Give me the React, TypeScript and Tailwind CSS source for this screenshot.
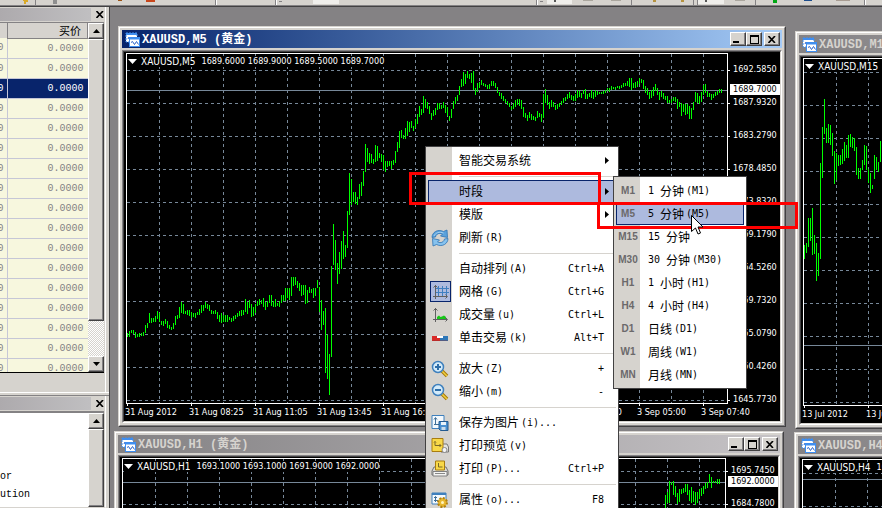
import type { ReactNode } from "react"
import clsx from "clsx"

type Run = { x: number; y: number; bars: string }

// Each bar is "high-low" in ticks, three ticks to a pixel, one bar every two pixels.
const m5Runs: Run[] = [
  {
    x: 1,
    y: 177,
    bars: `310-322 303-321 300-309 300-312 306-323 312-321 309-321 309-317 306-317 285-309 279-294 249-279
      264-279 264-276 258-276 243-267 249-276 273-285 273-288 267-282 273-293 285-297 291-300 279-297 258-285
      255-267 231-264 216-249 222-252 243-252 240-255 240-258 245-263 249-261 249-264 246-255 237-255 225-249
      225-243 216-234 222-237 225-243 239-251 243-253 240-252 246-267 255-276 249-279 255-276 255-276 255-275
      261-270 264-276 258-273 255-267 249-261 243-258 240-258 240-255 207-246 216-252 210-234 222-261 231-258
      222-249 213-228 207-225 210-222 204-231 216-240 213-231 195-219 195-228 213-231 207-231 219-228 213-231
      195-219 195-213 174-213 174-204 174-210 141-198 141-168 141-165 153-174 159-183 165-198 165-195 165-222
      180-219 171-189 177-189 174-204 174-198 150-174 171-246 210-300 243-285 234-429 315-447 372-495 108-381`,
  },
  {
    x: 207,
    y: -3,
    bars: `522-645 570-660 639-702 606-672 573-657 543-627 585-621 483-594 369-495 387-465 426-456 426-462
      441-465 402-447 396-438 363-408 282-366 294-336 309-342 312-339 327-342 285-336 288-333 309-324 312-336
      315-360 333-366 333-351 333-348 333-357 330-345 303-339 276-306 243-294 240-264 255-267 234-267 213-258
      216-246 213-234 228-243 207-234 192-222 168-201 177-195 138-189 147-174 156-177 168-192`,
  },
  {
    x: 305,
    y: -53,
    bars: `339-360 330-348 324-345 309-330 309-327 315-327 306-324 315-339 321-348 348-363 327-354 303-327
      291-312 285-303 258-285 237-261 216-258 222-252 213-234 222-237 219-249 213-270 264-285 249-276 246-264
      240-255 249-258 252-261 255-267 252-267 243-258 243-258 249-264 261-279 276-288 279-297 288-303 297-309
      303-315 309-321 318-330 309-327 300-321 297-315 297-318 300-327 321-351 339-354 345-363 336-354 342-360
      348-360 351-363 333-354 339-351 342-366 282-354 267-309 285-315 306-327 300-321 306-321 315-330 312-327
      309-321 303-315 294-309 291-303 282-297 276-294 285-300 288-303 282-303 270-294 273-291 279-294 270-282
      267-297 282-297 279-291 270-294 276-297 270-291 273-285 276-282 276-282 273-282 270-279 264-273 264-276
      258-270 261-267 261-270 258-264 258-267 255-264 249-261 249-258 243-258 234-261 234-270 249-264 246-264
      243-261 234-252 237-249 240-267 258-279 264-285 276-297 270-294 261-288 252-273 264-285 276-300 273-291
      279-297 288-300 288-309 300-309 297-309 291-303 291-306 297-327 306-321 309-348 312-336 312-345 312-342
      318-357 324-357 306-330 276-306 279-309 288-312 276-306 255-285 252-279 273-291 279-291 282-300 282-294
      276-288 273-285 267-279 267-279`,
  },
]

const m15Runs: Run[] = [
  {
    x: 1,
    y: -58,
    bars: `735-777 729-759 654-741 654-723 624-765 705-762 729-843 759-828 489-777 381-534 297-402 384-429
      372-429 375-435 399-468 453-552 459-540 465-498 465-495 447-492 426-483 435-474 405-474 402-441 411-444
      414-453 441-525 504-537 504-537 480-510 435-495 438-510 507-549 519-579 555-567 465-537 471-510 486-516
      423-486`,
  },
]

const h1Runs: Run[] = [
  {
    x: 543,
    y: -78,
    bars: `345-384 336-369 303-369 306-315 303-345 318-351 339-372 327-366 327-342 324-339 312-336 312-345
      330-363 321-369 333-366 336-375 336-369 327-357 324-348 318-342 309-327 306-324 282-309 291-324 303-309
      303-309 297-312 297-312`,
  },
]

const m5Prices = [
  "1692.5850",
  "1687.9320",
  "1683.2790",
  "1678.4850",
  "1673.8320",
  "1669.1790",
  "1664.5260",
  "1659.7320",
  "1655.0790",
  "1650.4260",
  "1645.7730",
]

const m5Times = [
  "31 Aug 2012",
  "31 Aug 08:25",
  "31 Aug 11:05",
  "31 Aug 13:45",
  "31 Aug 16:25",
  "31 Aug 19:05",
  "31 Aug 21:45",
  "3 Sep 02:20",
  "3 Sep 05:00",
  "3 Sep 07:40",
]

function barPath(run: Run) {
  return run.bars
    .trim()
    .split(/\s+/)
    .map((bar, i) => {
      const [high, low] = bar.split("-").map((t) => Math.round(Number(t) / 3 + run.y))
      return `M${run.x + i * 2 + 0.5} ${high}V${low}`
    })
    .join("")
}

function ChartIcon() {
  return (
    <svg width="15" height="15" viewBox="0 0 15 15" className="shrink-0" aria-hidden="true">
      <rect x="1" y="1" width="11" height="9" fill="#fff" stroke="#3f8ef0" strokeDasharray="2 1" />
      <path d="M1 2h11" stroke="#3f8ef0" strokeWidth="2" />
      <path d="M3 7l1-2 2 2 1-2" stroke="#2a62c8" fill="none" />
      <rect x="4.500" y="5.500" width="10" height="9" fill="#fff" stroke="#3f8ef0" />
      <path d="M4 6.500h11" stroke="#3f8ef0" strokeWidth="2" />
      <path d="M6 10.500l1.500-1 2 3 2-3 2 3" stroke="#2a62c8" fill="none" />
    </svg>
  )
}

function Cross() {
  return (
    <svg width="8" height="7" viewBox="0 0 8 7" aria-hidden="true">
      <path d="M.5 0l6.500 7M7 0l-6.500 7" stroke="#000" strokeWidth="1.600" />
    </svg>
  )
}

const bevel =
  "border border-t-white border-l-white border-r-[#424142] border-b-[#424142] bg-[#d6d3ce] shadow-[inset_-1px_-1px_0_#848284]"

function WindowButton({ label, children }: { label: string; children: ReactNode }) {
  return (
    <button aria-label={label} className={clsx(bevel, "flex h-[14px] w-4 items-center justify-center")}>
      {children}
    </button>
  )
}

type ChartProps = {
  symbol: string
  quote: string
  gridTop: number
  priceY: number
  width?: number
  height?: number
  runs?: Run[]
  prices?: string[]
  price?: string
  times?: string[]
}

function Chart({ symbol, quote, gridTop, priceY, width = 602, height = 351, runs = [], prices = [], price, times = [] }: ChartProps) {
  const columns = Array.from({ length: 18 }, (_, i) => 33 + i * 32)
  const rows = Array.from({ length: 11 }, (_, i) => gridTop + i * 33).filter((y) => y < height)
  return (
    <div className="relative flex-1 overflow-hidden bg-black pt-px pl-0.5 font-['DejaVu_Sans_Condensed','DejaVu_Sans',sans-serif] text-[9px] whitespace-nowrap text-white">
      <div className="flex">
        <svg width={width} height={height} className="shrink-0 overflow-visible" shapeRendering="crispEdges" aria-hidden="true">
          <g stroke="#778899" strokeDasharray="3 3">
            {columns.map((x) => (
              <path key={x} d={`M${x + 0.5} 1V${height - 1}`} />
            ))}
            {rows.map((y) => (
              <path key={y} d={`M1 ${y + 0.5}H${width - 1}`} />
            ))}
          </g>
          <path d={`M1 ${priceY + 0.5}H${width}`} stroke="#778899" />
          {runs.map((run) => (
            <path key={run.x} d={barPath(run)} stroke="#00ff00" />
          ))}
          <rect x=".5" y=".5" width={width - 1} height={height - 1} fill="none" stroke="#fff" />
          {rows.map((y) => (
            <path key={y} d={`M${width} ${y + 0.5}h2`} stroke="#fff" />
          ))}
          {times.map((_, i) => (
            <path key={i} d={`M${1.5 + i * 64} ${height}v2`} stroke="#fff" />
          ))}
        </svg>
        <div className="relative h-0 pl-[5px]">
          <div style={{ marginTop: gridTop - 17 }}>
            {prices.map((p) => (
              <div key={p} className="h-[33px] leading-[33px]">
                {p}
              </div>
            ))}
          </div>
          {price && (
            <div
              className="absolute left-0.5 bg-white px-[3px] leading-[11px] text-black"
              style={{ top: priceY - 6 }}
            >
              {price}
            </div>
          )}
        </div>
      </div>
      <div className="flex leading-[17px]">
        {times.map((t) => (
          <div key={t} className="w-16 shrink-0">
            <span className="-ml-px">{t}</span>
          </div>
        ))}
      </div>
      <div className="absolute top-1 left-[4px] flex items-center bg-black leading-[11px]">
        <svg width="13" height="5" viewBox="0 0 13 5" aria-hidden="true">
          <path d="M0 0h9L4.500 5z" fill="#fff" />
        </svg>
        <span className="text-[10px]">{symbol}</span>
        <span className="pl-1.5">{quote}</span>
      </div>
    </div>
  )
}

function ChartWindow({
  title,
  active,
  className,
  children,
}: {
  title: ReactNode
  active?: boolean
  className: string
  children: ReactNode
}) {
  return (
    <section className={clsx("absolute border border-t-[#d6d3ce] border-l-[#d6d3ce] border-r-[#424142] border-b-[#424142]", className)}>
      <div className="flex h-full flex-col border border-t-white border-l-white border-r-[#848284] border-b-[#848284] bg-[#d6d3ce] p-0.5">
        <header
          className={clsx(
            "flex h-[18px] shrink-0 items-center overflow-hidden pr-0.5 pl-[3px]",
            active ? "bg-linear-to-r from-[#08246b] to-[#a5cbf7]" : "bg-linear-to-r from-[#848284] to-[#c6c3c6]",
          )}
        >
          <ChartIcon />
          <h2
            className={clsx(
              "flex-1 pt-0.5 pl-0.5 font-['Liberation_Mono','Noto_Sans_CJK_SC',monospace] text-[12px] leading-4 font-bold whitespace-pre",
              active ? "text-white" : "text-[#d6d3ce]",
            )}
          >
            {title}
          </h2>
          <WindowButton label="最小化">
            <span className="mt-1.5 mr-1 h-0.5 w-1.5 bg-black" />
          </WindowButton>
          <WindowButton label="最大化">
            <span className="h-[9px] w-[9px] border border-t-2 border-black" />
          </WindowButton>
          <span className="w-0.5" />
          <WindowButton label="关闭">
            <Cross />
          </WindowButton>
        </header>
        <div className="mt-0.5 flex min-h-0 flex-1 border-t border-r border-b border-l border-t-[#848284] border-r-white border-b-white border-l-[#848284]">
          <div className="flex flex-1 border-t border-r border-b border-l border-t-[#424142] border-r-[#d6d3ce] border-b-[#d6d3ce] border-l-[#424142]">
            {children}
          </div>
        </div>
      </div>
    </section>
  )
}

function Toolbar() {
  return (
    <header className="h-[7px] shrink-0 overflow-hidden border-b border-[#424142] bg-[#d6d3ce]">
      <svg width="882" height="6" viewBox="0 0 882 6" shapeRendering="crispEdges" aria-hidden="true">
        <path d="M35.500 0v5M697.500 0v5M755.500 0v5M631.500 0v5M693.500 0v5" stroke="#848284" />
        <path d="M215.500 0v6M275.500 0v6M536.500 0v6M864.500 0v6" stroke="#848284" />
        <path d="M216.500 0v6M276.500 0v6M537.500 0v6M865.500 0v6" stroke="#fff" />
        <path d="M279 1.500h3M540 1.500h3" stroke="#848284" />
        <path d="M313 0h26v4h-26zM547 0h25v4h-25zM698 0h26v4h-26z" fill="#efeeeb" />
        <path d="M23 0h5v2h-2v2h-2v-2z" fill="#d9a928" />
        <path d="M53 0h4v4h-4z" fill="#8f8f8f" />
        <path d="M118 0h4v1h-4z" fill="#9c5315" />
        <path d="M146 0h9v2h-9z" fill="#c8461b" />
        <path d="M554 0h2v2h-2zM705 0h2v2h-2z" fill="#555" />
        <path d="M583 0h10v1h-10zM611 0h10v1h-10zM735 0h10v1h-10z" fill="#aaa69e" />
        <path d="M653 0h3v2h-3zM681 0h3v2h-3z" fill="#b5923e" />
        <path d="M773 0h4v3h-4z" fill="#00a814" />
        <path d="M804 0h8v1h-8z" fill="#1c4c8c" />
        <path d="M836 0h14v1h-14z" fill="#a89c92" />
        <path d="M0 5.500h882" stroke="#848284" />
      </svg>
    </header>
  )
}

function ScrollButton({ down }: { down?: boolean }) {
  return (
    <button aria-label={down ? "向下滚动" : "向上滚动"} className={clsx(bevel, "flex h-4 w-4 shrink-0 items-center justify-center")}>
      <svg width="7" height="4" viewBox="0 0 7 4" aria-hidden="true">
        <path d={down ? "M0 0h7L3.500 4z" : "M0 4h7L3.500 0z"} />
      </svg>
    </button>
  )
}

function PanelTitle() {
  return (
    <div className="flex h-[15px] shrink-0 items-center gap-[5px]">
      <div className="h-[13px] w-[91px] bg-linear-to-r from-[#adaaad] to-[#c0bfc1]" />
      <button aria-label="关闭面板">
        <Cross />
      </button>
    </div>
  )
}

function SidePanel() {
  return (
    <aside className="flex w-[110px] shrink-0 flex-col border-r border-[#424142] bg-[#d6d3ce] pr-[3px]">
      <div className="border-r border-white pr-px pb-[19px]">
        <PanelTitle />
        <div className="flex h-[351px] border-t border-b border-t-[#848284] border-b-black">
          <div className="flex-1 overflow-hidden bg-[#f7f7de]">
            <table className="w-full table-fixed border-collapse">
              <thead>
                <tr>
                  <th className="h-[15px] w-[7px] border-r border-[#848284] bg-[#d6d3ce] p-0" />
                  <th className="h-[15px] border-r border-b border-[#848284] bg-[#d6d3ce] p-0 pr-1.5 text-right font-['Noto_Sans_CJK_SC',sans-serif] text-[11px] leading-[14px] font-normal">
                    买价
                  </th>
                </tr>
              </thead>
              <tbody className="font-['Liberation_Mono',monospace] text-[10px] leading-[19px] text-[#848284]">
                {Array.from({ length: 17 }, (_, i) => (
                  <tr key={i} className={clsx("border-b border-[#c6c7d6]", i === 2 && "bg-[#08246b] text-white")}>
                    <td className="border-r border-[#c6c7d6] p-0">
                      <div className="flex h-[19px] justify-end overflow-hidden pr-[3px]">0</div>
                    </td>
                    <td className="h-5 p-0 pr-1 text-right">0.0000</td>
                  </tr>
                ))}
              </tbody>
            </table>
          </div>
          <div className="flex w-4 flex-col bg-[repeating-conic-gradient(#fff_0_25%,#d6d3ce_0_50%)] bg-size-[2px_2px]">
            <ScrollButton />
            <div className={clsx(bevel, "h-[282px]")} />
            <div className="flex-1" />
            <ScrollButton down />
          </div>
        </div>
      </div>
      <div className="-mr-[3px] h-1 shrink-0 border-t border-b border-t-white border-b-[#848284]" />
      <div className="flex flex-1 flex-col border-r border-b border-r-white border-b-[#d6d3ce] pr-px">
        <PanelTitle />
        <div className="flex flex-1 border-t-2 border-[#848284]">
          <ul className="flex-1 overflow-hidden bg-white pt-[55px] font-['Liberation_Mono',monospace] text-[10px] leading-[18px]">
            <li>or</li>
            <li>ution</li>
          </ul>
          <div className="flex w-4 flex-col">
            <ScrollButton />
            <div className={clsx(bevel, "flex-1")} />
          </div>
        </div>
      </div>
    </aside>
  )
}

function Icon({ children }: { children: ReactNode }) {
  return (
    <svg width="18" height="18" viewBox="0 0 18 18" fill="none" aria-hidden="true">
      {children}
    </svg>
  )
}

const icons = {
  refresh: (
    <Icon>
      <path d="M1 8.500C1 3.500 6.500-.5 12.500 2.500L16 1l.5 7.500-7-1.500L11.500 5C8 3.500 5 5 4.500 8z" fill="#5aa2dc" stroke="#2f74b4" strokeWidth=".8" />
      <path d="M17 9.500c0 5-5.500 9-11.500 6L2 17l-.5-7.500 7 1.500-2 2c3.500 1.500 6.500 0 7-3z" fill="#86c2ee" stroke="#2f74b4" strokeWidth=".8" />
      <path d="M3 7C4.500 3.500 8.500 2.500 12.500 4" stroke="#b8dcf6" strokeWidth=".8" />
    </Icon>
  ),
  grid: (
    <Icon>
      <path d="M7.500 3v10M11.500 3v10M15.500 3v10M4 5.500h14M4 9.500h14" stroke="#3f7fc0" />
      <path d="M4.500 2v14M2 13.500h14M2.500 4.500l2-2 2 2M14.500 11.500l2 2-2 2" stroke="#606060" />
    </Icon>
  ),
  volume: (
    <Icon>
      <path d="M6 13v-2l2-1.500 1.500 1.500 1.500-.5 2-1 2 1.500v2z" fill="#18c818" />
      <path d="M4.500 2v14M2 13.500h14M2.500 4.500l2-2 2 2M14.500 11.500l2 2-2 2" stroke="#606060" />
    </Icon>
  ),
  trade: (
    <Icon>
      <path d="M1 7h8v5H1z" fill="#d92b28" />
      <path d="M9 7h8v5H9z" fill="#2f78b8" />
      <path d="M6 7h6v2H6z" fill="#fff" />
      <path d="M1.500 11.500h15" stroke="#8a3030" strokeOpacity=".4" />
    </Icon>
  ),
  zoomIn: (
    <Icon>
      <path d="M11 11l5 5" stroke="#a87808" strokeWidth="3.500" />
      <path d="M11 11l5 5" stroke="#f0d040" strokeWidth="1.500" />
      <circle cx="7" cy="7" r="5.500" fill="#d4ebfa" stroke="#3f80bd" strokeWidth="1.500" />
      <path d="M7 4v6M4 7h6" stroke="#2f6ea8" strokeWidth="2" />
    </Icon>
  ),
  zoomOut: (
    <Icon>
      <path d="M11 11l5 5" stroke="#a87808" strokeWidth="3.500" />
      <path d="M11 11l5 5" stroke="#f0d040" strokeWidth="1.500" />
      <circle cx="7" cy="7" r="5.500" fill="#d4ebfa" stroke="#3f80bd" strokeWidth="1.500" />
      <path d="M4 7h6" stroke="#2f6ea8" strokeWidth="2" />
    </Icon>
  ),
  save: (
    <Icon>
      <path d="M1 1.500h12v13H1z" fill="#f4f9fd" stroke="#3f80bd" />
      <path d="M4.500 4v7M3 5.500l1.500-2L6 5.500M3 10.500h6" stroke="#3f6f98" />
      <path d="M8 7.500h9v9H9.500L8 15z" fill="#4a90d0" stroke="#235a90" />
      <path d="M10 8h5v3h-5z" fill="#e8f3fb" />
      <path d="M10.500 13h4v3h-4z" fill="#c8dcec" />
    </Icon>
  ),
  preview: (
    <Icon>
      <path d="M10 7h6l1.500 3v5H10z" fill="#e4e4e0" stroke="#777" />
      <path d="M1 1.500h11v13H1z" fill="#f8d848" stroke="#a87c10" />
      <path d="M4 4.500v4h6M3 5.500l1-1 1 1M8.500 7l1.500 1.500-1.500 1.500" stroke="#7a6828" />
      <circle cx="13.500" cy="13" r="2.500" fill="#f4f4f4" stroke="#888" />
    </Icon>
  ),
  print: (
    <Icon>
      <path d="M3 7h12l2 4v4H1v-4z" fill="#d8d8d6" stroke="#707070" />
      <path d="M4.500 1h9v9h-9z" fill="#f8d848" stroke="#a87c10" />
      <path d="M7.500 3v4h4" stroke="#7a6828" />
      <path d="M2 11.500h14v4.500H2z" fill="#f4f4f2" stroke="#808080" />
      <path d="M4 13.500h10" stroke="#888" />
    </Icon>
  ),
  properties: (
    <Icon>
      <path d="M1 2h14v11H1z" fill="#f4f9fd" stroke="#3f80bd" />
      <path d="M1 3h14" stroke="#3f80bd" strokeWidth="2" />
      <path d="M4.500 5.500V11M3 7l1.500-1.500L6 7M3 9.500h4" stroke="#3f6f98" />
      <circle cx="11.500" cy="11.500" r="4.500" fill="#e8b830" stroke="#b08010" strokeDasharray="2 1.500" strokeWidth="2" />
      <circle cx="11.500" cy="11.500" r="1.500" fill="#fff4c0" />
    </Icon>
  ),
}

type MenuEntry = {
  label: string
  hotkey?: string
  shortcut?: string
  icon?: keyof typeof icons
  submenu?: boolean
  selected?: boolean
  checked?: boolean
}

const menuGroups: MenuEntry[][] = [
  [{ label: "智能交易系统", submenu: true }],
  [
    { label: "时段", submenu: true, selected: true },
    { label: "模版", submenu: true },
    { label: "刷新", hotkey: "(R)", icon: "refresh" },
  ],
  [
    { label: "自动排列", hotkey: "(A)", shortcut: "Ctrl+A" },
    { label: "网格", hotkey: "(G)", shortcut: "Ctrl+G", icon: "grid", checked: true },
    { label: "成交量", hotkey: "(u)", shortcut: "Ctrl+L", icon: "volume" },
    { label: "单击交易", hotkey: "(k)", shortcut: "Alt+T", icon: "trade" },
  ],
  [
    { label: "放大", hotkey: "(Z)", shortcut: "+", icon: "zoomIn" },
    { label: "缩小", hotkey: "(m)", shortcut: "-", icon: "zoomOut" },
  ],
  [
    { label: "保存为图片", hotkey: "(i)...", icon: "save" },
    { label: "打印预览", hotkey: "(v)", icon: "preview" },
    { label: "打印", hotkey: "(P)...", shortcut: "Ctrl+P", icon: "print" },
  ],
  [{ label: "属性", hotkey: "(o)...", shortcut: "F8", icon: "properties" }],
]

const periods = [
  { code: "M1", count: "1", unit: "分钟", hotkey: "(M1)" },
  { code: "M5", count: "5", unit: "分钟", hotkey: "(M5)", selected: true },
  { code: "M15", count: "15", unit: "分钟" },
  { code: "M30", count: "30", unit: "分钟", hotkey: "(M30)" },
  { code: "H1", count: "1", unit: "小时", hotkey: "(H1)" },
  { code: "H4", count: "4", unit: "小时", hotkey: "(H4)" },
  { code: "D1", unit: "日线", hotkey: "(D1)" },
  { code: "W1", unit: "周线", hotkey: "(W1)" },
  { code: "MN", unit: "月线", hotkey: "(MN)" },
]

const mono = "font-['DejaVu_Sans_Mono',monospace] text-[10px]"
const menuBox =
  "absolute border border-[#424142] bg-[linear-gradient(to_right,#d6d3ce_26px,#fff_26px)] p-0.5 font-['Noto_Sans_CJK_SC',sans-serif] text-[12px] text-black"
const highlight = "bg-[#adbade] outline -outline-offset-1 outline-[#08246b]"

function ContextMenu() {
  return (
    <div role="menu" className={clsx(menuBox, "top-[139px] left-[315px] w-[194px]")}>
      {menuGroups.map((group, g) => (
        <div key={g}>
          {g > 0 && (
            <div className="ml-[31px] h-2 pt-1">
              <div className="h-px bg-[#d6d3ce]" />
            </div>
          )}
          {group.map((item) => (
            <button
              key={item.label}
              role="menuitem"
              className={clsx("flex h-[23px] w-full items-center", item.selected && highlight)}
            >
              <span className="flex w-6 shrink-0 justify-center">
                {item.icon && (
                  <span className={clsx("flex h-[21px] w-[21px] items-center justify-center", item.checked && highlight)}>
                    {icons[item.icon]}
                  </span>
                )}
              </span>
              <span className="pb-0.5 pl-[7px]">{item.label}</span>
              <span className={clsx(mono, "pl-0.5")}>{item.hotkey}</span>
              <span className={clsx(mono, "ml-auto pr-3")}>{item.shortcut}</span>
              {item.submenu && (
                <svg width="4" height="7" viewBox="0 0 4 7" className="mr-[7px]" aria-hidden="true">
                  <path d="M0 0l4 3.500L0 7z" />
                </svg>
              )}
            </button>
          ))}
        </div>
      ))}
    </div>
  )
}

function PeriodMenu() {
  return (
    <div role="menu" className={clsx(menuBox, "top-[169px] left-[503px] w-[134px]")}>
      {periods.map((p) => (
        <button key={p.code} role="menuitem" className={clsx("flex h-[23px] w-full items-center", p.selected && highlight)}>
          <span className="w-6 shrink-0 text-center font-['Liberation_Sans',sans-serif] text-[10px] font-bold whitespace-nowrap text-[#6b696b]">
            {p.code}
          </span>
          <span className="flex items-center pl-2">
            {p.count && <span className={clsx(mono, "pr-1.5")}>{p.count}</span>}
            {p.unit}
            <span className={clsx(mono, "pl-0.5")}>{p.hotkey}</span>
          </span>
        </button>
      ))}
    </div>
  )
}

export default function App() {
  return (
    <div className="flex h-screen flex-col overflow-hidden bg-[#848284]">
      <Toolbar />
      <div className="flex min-h-0 flex-1">
        <SidePanel />
        <main className="relative flex-1 overflow-hidden">
          <ChartWindow title="XAUUSD,H4 (黄金)" className="top-[425px] left-[684px] h-[401px] w-[668px]">
            <Chart symbol="XAUUSD,H4" quote="1688.7000 1692.0000" gridTop={14} priceY={20} />
          </ChartWindow>
          <ChartWindow title="XAUUSD,M15 (黄金)" className="top-[24px] left-[685px] h-[398px] w-[668px]">
            <Chart
              symbol="XAUUSD,M15"
              quote="1689.6000"
              gridTop={14}
              priceY={287}
              height={348}
              runs={m15Runs}
              times={["13 Jul 2012", "13 Jul 18:15"]}
            />
          </ChartWindow>
          <ChartWindow title="XAUUSD,H1 (黄金)" className="top-[424px] left-[4px] h-[401px] w-[670px]">
            <Chart
              symbol="XAUUSD,H1"
              quote="1693.1000 1693.1000 1691.9000 1692.0000"
              gridTop={13}
              priceY={24}
              width={604}
              runs={h1Runs}
              prices={["1695.7450", "1684.7800"]}
              price="1692.0000"
            />
          </ChartWindow>
          <ChartWindow active title="XAUUSD,M5 (黄金)" className="top-[19px] left-[8px] h-[401px] w-[668px]">
            <Chart
              symbol="XAUUSD,M5"
              quote="1689.6000 1689.9000 1689.5000 1689.7000"
              gridTop={17}
              priceY={37}
              runs={m5Runs}
              prices={m5Prices}
              price="1689.7000"
              times={m5Times}
            />
          </ChartWindow>
          <ContextMenu />
          <PeriodMenu />
          <div className="absolute top-[165px] left-[299px] h-[33px] w-[192px] border-3 border-[#ff0000]" />
          <div className="absolute top-[195px] left-[487px] h-[27px] w-[201px] border-3 border-[#ff0000]" />
          <svg width="13" height="21" viewBox="0 0 13 21" className="absolute top-[208px] left-[581px]" aria-hidden="true">
            <path d="M.5.5v16l4-3.500 2.500 6 2.500-1L7 12h5z" fill="#fff" stroke="#000" />
          </svg>
        </main>
      </div>
    </div>
  )
}
